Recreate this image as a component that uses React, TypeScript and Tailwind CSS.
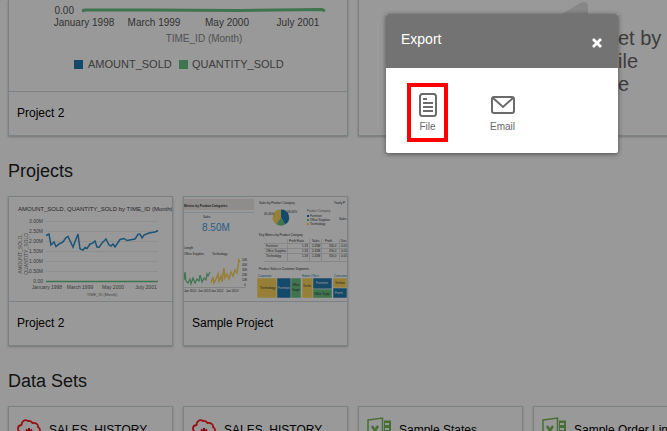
import type { ReactNode } from "react";

const card =
  "shrink-0 overflow-hidden border border-[#cfd8dd] bg-white shadow-[0_1px_2px_rgba(0,0,0,0.25)]";

function Section({ title, children }: { title: string; children: ReactNode }) {
  return (
    <section className="pt-[23px]">
      <h2 className="mb-[13px] text-lg leading-6 text-[#222]">{title}</h2>
      <div className="flex gap-[10px]">{children}</div>
    </section>
  );
}

function ProjectCard({ name, children }: { name: string; children: ReactNode }) {
  return (
    <article className={`${card} w-[165px]`}>
      <div className="h-[105px] border-b border-[#cfd8dd]">{children}</div>
      <h3 className="px-2 py-3 text-xs leading-[19px] text-black">{name}</h3>
    </article>
  );
}

function LargeChart() {
  return (
    <svg width="338" height="91" viewBox="9 0 338 91" className="block" fontSize="10" fill="#555">
      <text x="74" y="14" textAnchor="end">0.00</text>
      <path d="M82 11L85 10H150L240 10.500L322 9.500L325 11" stroke="#68c182" strokeWidth="3" fill="none" />
      <g textAnchor="middle">
        <text x="84" y="26">January 1998</text>
        <text x="154" y="26">March 1999</text>
        <text x="227" y="26">May 2000</text>
        <text x="298" y="26">July 2001</text>
        <text x="204" y="42" fill="#888">TIME_ID (Month)</text>
      </g>
      <rect x="74" y="60" width="9" height="9" fill="#237bb1" />
      <rect x="179" y="60" width="9" height="9" fill="#68c182" />
      <g fontSize="11" fill="#666">
        <text x="88" y="68">AMOUNT_SOLD</text>
        <text x="192" y="68">QUANTITY_SOLD</text>
      </g>
    </svg>
  );
}

const yTicks = ["3.00M", "2.50M", "2.00M", "1.50M", "1.00M", "0.50M", "0.00"];

function SmallChart() {
  return (
    <svg width="163" height="104" viewBox="9 197 163 104" className="block" fill="#666" fontSize="5">
      <text x="18" y="211" fontSize="6" fill="#444">AMOUNT_SOLD, QUANTITY_SOLD by TIME_ID (Month(</text>
      {yTicks.map((t, i) => (
        <g key={t}>
          <path d={`M46 ${221.5 + i * 10}H158`} stroke="#eee" />
          <text x="43" y={223 + i * 10} textAnchor="end">{t}</text>
        </g>
      ))}
      <g transform="rotate(-90)" fill="#777" textAnchor="middle">
        <text x="-254" y="22">AMOUNT_SOLD,</text>
        <text x="-254" y="28">QUANTITY_SOLD</text>
      </g>
      <path
        d="M46 235.500L49 234L51 245L54 242L56 246.500L59 244L63 242L66 237.500L68 236.500L73 247L78 234L80 249L83 250L85 247.500L87 248.500L90 244L92 243.500L95 241L97 247L99 247.500L102 243L106 239L109 245L111 246L113 244L115 247L117 244L120 239.500L124 238.500L127 240.500L135 239L138 234.500L140 234L142 238L144 235L149 233L155 232L158 230.500"
        fill="none"
        stroke="#2d8cc6"
        strokeWidth="1.500"
      />
      <path d="M46 281.500H158" stroke="#68c182" strokeWidth="1.500" />
      <g textAnchor="middle">
        <text x="47" y="289">January 1998</text>
        <text x="80" y="289">March 1999</text>
        <text x="113" y="289">May 2000</text>
        <text x="146" y="289">July 2001</text>
        <text x="102" y="296" fill="#777" fontSize="4">TIME_ID (Month)</text>
      </g>
    </svg>
  );
}

function Dashboard() {
  return (
    <svg width="163" height="104" viewBox="184 197 163 104" className="block" fill="#333" fontSize="3">
      <rect x="184" y="199" width="70" height="11" fill="#eee9e9" />
      <text x="184" y="207" fontWeight="bold">Metrics by Product Categories</text>
      <path d="M184 212.500H254" stroke="#dce8f2" />
      <text x="203" y="218">Sales</text>
      <text x="202" y="231" fontSize="10" fill="#4aa0dc">8.50M</text>
      <text x="184" y="249">Length</text>
      <text x="184" y="255">Office Supplies</text>
      <text x="212" y="255">Technology</text>

      <text x="259" y="204">Sales by Product Category</text>
      <text x="334" y="204">Yearly P</text>
      <path d="M281 217.500V209.500A8 8 0 0 1 285 224.500Z" fill="#237bb1" />
      <path d="M281 217.500L285 224.500A8 8 0 0 1 276 224Z" fill="#68c182" />
      <path d="M281 217.500L276 224A8 8 0 0 1 281 209.500Z" fill="#fad55c" />
      <text x="264" y="215">45.00%</text>
      <text x="287" y="213">33.00%</text>
      <text x="307" y="212" fill="#777">Product Category</text>
      <rect x="307" y="215" width="2" height="2" fill="#237bb1" />
      <rect x="307" y="219" width="2" height="2" fill="#68c182" />
      <rect x="307" y="223" width="2" height="2" fill="#fad55c" />
      <text x="310" y="217">Furniture</text>
      <text x="310" y="221">Office Supplies</text>
      <text x="310" y="225">Technology</text>
      <text x="339" y="220">Sales</text>

      <text x="259" y="236">Key Metrics by Product Category</text>
      <text x="289" y="242">Profit Ratio</text>
      <text x="312" y="242">Sales</text>
      <text x="325" y="242">Profit</text>
      <text x="341" y="242">Disc</text>
      <path d="M264 243.500H347M264 248.500H347M264 253.500H347M264 261.500H347M287.500 239V261M309.500 239V261M321.500 239V261M339.500 239V261" stroke="#e2e2e2" fill="none" />
      {["Furniture", "Office Supplies", "Technology"].map((t, i) => (
        <g key={t}>
          <text x="266" y={247 + i * 5}>{t}</text>
          <text x="302" y={247 + i * 5}>1.33</text>
          <text x="312" y={247 + i * 5}>2.45M</text>
          <text x="329" y={247 + i * 5}>350.0</text>
          <text x="341" y={247 + i * 5}>0.05</text>
        </g>
      ))}

      <path d="M184 280L185 272L186 281L188 283L190 279L191 284L193 278L195 283L197 279L199 281L200 275L202 282L204 278L206 280L207 274L208 276L210 272" fill="none" stroke="#68c182" strokeWidth="1.200" />
      <path d="M211 283L213 277L214 283L216 279L218 274L219 281L221 276L222 282L224 268L225 278L227 274L229 279L231 272L233 276L235 270L237 273L239 260L240 262" fill="none" stroke="#fad55c" strokeWidth="1.500" />
      <text x="242" y="261">50K</text>
      <text x="242" y="266">40K</text>
      <text x="242" y="271">30K</text>
      <text x="242" y="276">20K</text>
      <text x="242" y="281">10K</text>
      <text x="244" y="286">0</text>
      <path d="M184 287.500H246" stroke="#ddd" />
      <text x="184" y="292">Jan 2012</text>
      <text x="198" y="292">Jan 2013</text>
      <text x="211" y="292">Jan 2012</text>
      <text x="226" y="292">Jan 2013</text>

      <text x="259" y="270">Product Sales in Customer Segments</text>
      <g fill="#237bb1">
        <text x="258" y="277">Corporate</text>
        <text x="302" y="277">Home Office</text>
        <text x="334" y="277">Consumer</text>
      </g>
      <g stroke="#fff" strokeWidth="0.500">
        <path d="M257 278H277V298H257ZM302 278H313V298H302ZM333 278H347V288H333Z" fill="#fad55c" />
        <path d="M277 278H291V298H277ZM313 278H332V289H313ZM333 288H347V298H333Z" fill="#237bb1" />
        <path d="M291 278H301V298H291ZM313 289H332V298H313Z" fill="#68c182" />
      </g>
      <text x="260" y="289">Technology</text>
      <text x="278" y="289" fill="#fff">Furniture</text>
      <text x="292" y="286">Office</text>
      <text x="292" y="291">Suppl.</text>
      <text x="303" y="287">Techn.</text>
      <text x="316" y="284" fill="#fff">Furniture</text>
      <text x="314" y="295">Office Supp</text>
      <text x="335" y="284">Techno</text>
      <text x="335" y="294" fill="#fff">Furnit</text>
    </svg>
  );
}

function OracleIcon() {
  return (
    <svg width="24" height="24" viewBox="0 0 24 24" fill="none" aria-hidden="true" className="shrink-0">
      <path d="M5 15C-0.500 13 0 7.500 4.500 7C4.500 3 8 1 11 3C14 2.500 15 4 15.500 5C19 4.500 21.500 6.500 21 9C24 11 23.500 14.500 20 15" stroke="#ff1a22" strokeWidth="1.800" />
      <path d="M12 10V20M9 11.500L15 17M15 11.500L9 17M6 14H18" stroke="#d4161c" strokeWidth="2" />
    </svg>
  );
}

function ExcelIcon() {
  return (
    <svg width="24" height="26" viewBox="0 0 24 26" fill="none" aria-hidden="true" className="shrink-0">
      <path d="M1 3L15.500 1V25L1 23Z" fill="#fff" stroke="#78b956" strokeWidth="1.500" />
      <path d="M17 3.500H24V22H17" fill="#78b956" />
      <path d="M18 7H22M18 12H22M18 17H22" stroke="#fff" strokeWidth="2" />
      <path d="M5 9L11 18M11 9L5 18" stroke="#78b956" strokeWidth="2.500" />
    </svg>
  );
}

const dataSets = [
  { id: 1, name: "SALES_HISTORY", excel: false },
  { id: 2, name: "SALES_HISTORY", excel: false },
  { id: 3, name: "Sample States", excel: true },
  { id: 4, name: "Sample Order Lines", excel: true },
];

function ExportDialog() {
  const option =
    "flex h-[59px] w-[41px] flex-col items-center gap-1 border-4 pt-[6px] text-[10px] leading-3 text-[#666]";
  return (
    <div
      role="dialog"
      aria-labelledby="export-title"
      className="absolute top-[14px] right-[49px] w-[232px] overflow-hidden rounded-[2px] bg-white shadow-[0_1px_5px_rgba(0,0,0,0.5)]"
    >
      <header className="flex h-[54px] items-center justify-between bg-[#737373] px-[15px] text-white">
        <h2 id="export-title" className="pb-1 text-sm leading-5">Export</h2>
        <button type="button" aria-label="Close" className="pt-1">
          <svg width="12" height="12" viewBox="0 0 12 12" className="block">
            <path d="M2 2L10 10M10 2L2 10" stroke="#fff" strokeWidth="2.800" />
          </svg>
        </button>
      </header>
      <div className="flex gap-[34px] px-[21px] pt-[15px] pb-[11px]">
        <button type="button" className={`${option} border-[#f00]`}>
          <svg width="18" height="24" viewBox="0 0 18 24" fill="none" stroke="#6b6b6b" strokeWidth="2" className="shrink-0">
            <rect x="1" y="1" width="16" height="22" rx="2.500" />
            <path d="M4 6H8M4 10H14M4 14H14M4 18H14" />
          </svg>
          File
        </button>
        <button type="button" className={`${option} border-transparent`}>
          <svg width="24" height="24" viewBox="0 0 24 24" fill="none" stroke="#6b6b6b" strokeWidth="2" className="shrink-0">
            <rect x="1" y="4" width="22" height="16" rx="2" />
            <path d="M2 5L12 14L22 5" />
          </svg>
          Email
        </button>
      </div>
    </div>
  );
}

export default function App() {
  return (
    <div className="relative h-screen overflow-hidden bg-white font-['Liberation_Sans',Arial,sans-serif]">
      <main className="px-2">
        <div className="flex gap-[10px]">
          <article className={`${card} w-[340px] border-t-0`}>
            <div className="border-b border-[#cfd8dd]">
              <LargeChart />
            </div>
            <h3 className="px-2 py-3 text-xs leading-[19px] text-black">Project 2</h3>
          </article>
          <article className={`${card} w-[340px] border-t-0 pl-[203px]`}>
            <svg width="28" height="14" viewBox="0 0 28 14" className="block" aria-hidden="true">
              <path d="M0 14L18 3Q25 0 26 6V14Z" fill="#e2e2e2" />
            </svg>
            <p className="mt-[13px] pl-[56px] text-xl leading-[23px] whitespace-pre text-[#666]">
              {"et by\nile\ne"}
            </p>
          </article>
        </div>

        <Section title="Projects">
          <ProjectCard name="Project 2"><SmallChart /></ProjectCard>
          <ProjectCard name="Sample Project"><Dashboard /></ProjectCard>
        </Section>

        <Section title="Data Sets">
          {dataSets.map((d) => (
            <article key={d.id} className={`${card} flex w-[165px] items-center gap-2 px-2 py-[10px]`}>
              {d.excel ? <ExcelIcon /> : <OracleIcon />}
              <h3 className="text-xs leading-[26px] whitespace-nowrap text-black">{d.name}</h3>
            </article>
          ))}
        </Section>
      </main>
      <div className="absolute inset-0 bg-black/40">
        <ExportDialog />
      </div>
    </div>
  );
}
